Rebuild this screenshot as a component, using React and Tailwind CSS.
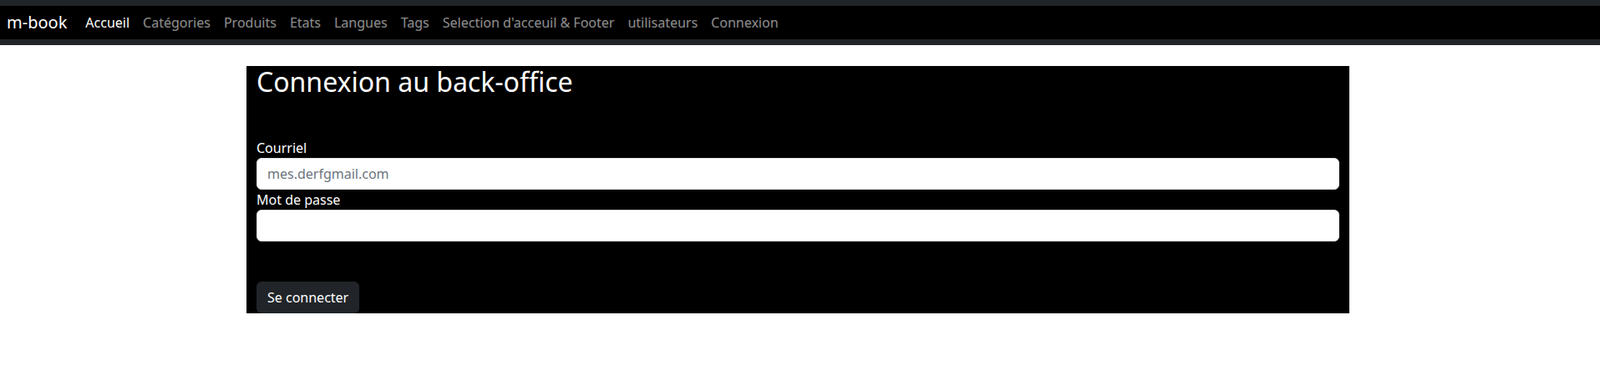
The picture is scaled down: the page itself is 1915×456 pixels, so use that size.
import React from 'react';

const LINKS = [
  { label: 'Accueil', active: true },
  { label: 'Catégories' },
  { label: 'Produits' },
  { label: 'Etats' },
  { label: 'Langues' },
  { label: 'Tags' },
  { label: "Selection d'acceuil & Footer" },
  { label: 'utilisateurs' },
  { label: 'Connexion' },
];

const Navbar = () => (
  <nav className="bg-[#212529] py-[7px]">
    <div className="bg-black h-[40px] flex items-center pl-[8px]">
      <span className="text-white text-[20px] leading-[30px] mr-[14px]">m-book</span>
      <ul className="flex items-center">
        {LINKS.map((l) => (
          <li key={l.label}>
            <a
              href="#"
              className={`block px-[8px] text-[16px] leading-[24px] ${
                l.active ? 'text-white' : 'text-white/55'
              }`}
            >
              {l.label}
            </a>
          </li>
        ))}
      </ul>
    </div>
  </nav>
);

const App = () => {
  return (
    <div className="min-h-[456px] bg-white font-['Noto_Sans',sans-serif] text-[16px] leading-[24px]">
      <Navbar />

      {/* Login card */}
      <div className="w-[1320px] ml-[295px] mt-[25px] bg-black px-[12px] text-white">
        <h2 className="text-[32px] leading-[38px] font-normal">Connexion au back-office</h2>

        <form className="mt-[48px]" onSubmit={(e) => e.preventDefault()}>
          <label className="block">Courriel</label>
          <input
            type="email"
            placeholder="mes.derfgmail.com"
            className="block w-full h-[38px] px-[12px] bg-white text-[#212529] placeholder:text-[#6c757d] border border-[#dee2e6] rounded-[6px] outline-none"
          />
          <label className="block">Mot de passe</label>
          <input
            type="password"
            className="block w-full h-[38px] px-[12px] bg-white text-[#212529] border border-[#dee2e6] rounded-[6px] outline-none"
          />
          <div className="h-[48px]" />
          <button
            type="submit"
            className="h-[38px] px-[12px] bg-[#212529] border border-[#212529] text-white rounded-[6px]"
          >
            Se connecter
          </button>
        </form>
      </div>
    </div>
  );
};

export default App;
